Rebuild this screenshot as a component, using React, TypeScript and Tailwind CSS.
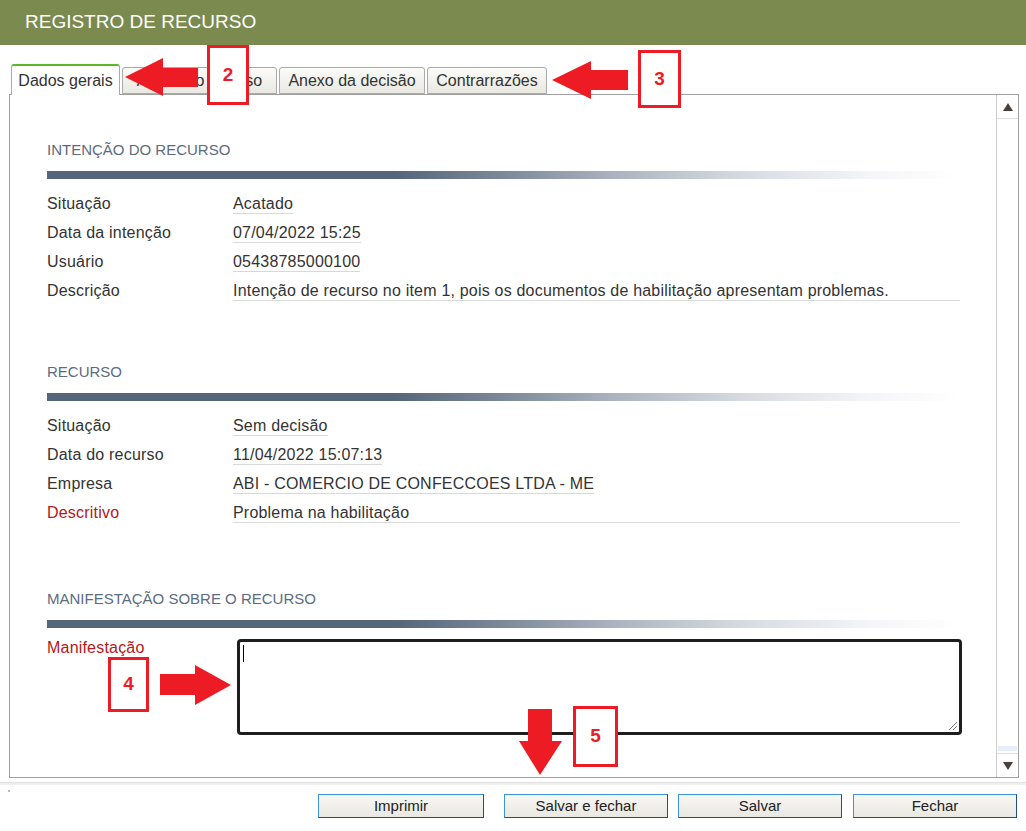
import React from "react";

const font = { fontFamily: '"Liberation Sans", Arial, sans-serif' };

function Row({ label, value, wide, red }: { label: string; value: string; wide?: boolean; red?: boolean }) {
  return (
    <div className="flex h-[29px] items-start pt-[5px] text-[16px] tracking-[0.2px]">
      <div className={`w-[186px] shrink-0 leading-[18px] ${red ? "text-[#b5171c]" : "text-[#333]"}`}>{label}</div>
      <div className={`leading-[18px] border-b border-[#d9d9d9] text-[#333] ${wide ? "flex-1" : ""}`}>{value}</div>
    </div>
  );
}

function Section({ title, children, mt }: { title: string; children?: React.ReactNode; mt: string }) {
  return (
    <div className={mt}>
      <div className="text-[15px] leading-[20px] text-[#5b6c80]">{title}</div>
      <div className="mt-[11px] mb-[11px] h-[8px] w-[913px] bg-[linear-gradient(to_right,#55657a_0%,#55657a_38%,#7d8999_50%,#aab3be_62%,#d6dae0_76%,#f4f5f7_90%,#ffffff_100%)]" />
      {children}
    </div>
  );
}

function Tab({ label, active, w }: { label: string; active?: boolean; w: string }) {
  if (active) {
    return (
      <div className={`${w} h-[31px] -mb-px bg-white border-x border-[#aaa] border-t-2 border-t-[#5cb82a] rounded-t-[3px] flex items-center justify-center text-[16px] text-[#333]`}>
        {label}
      </div>
    );
  }
  return (
    <div className={`${w} h-[27px] mt-[2px] bg-[linear-gradient(#fbfbf8,#e9e8e1)] border border-[#a9a9a9] rounded-t-[3px] flex items-center justify-center text-[16px] text-[#333]`}>
      {label}
    </div>
  );
}

function Btn({ label, w, className }: { label: string; w: string; className?: string }) {
  return (
    <div
      className={`${w} h-[24px] border border-[#3d93dc] border-b-[#1f4f85] border-r-[#1f4f85] bg-[linear-gradient(#f7f7f4,#e9e8e2)] flex items-center justify-center text-[15px] text-[#222] ${className ?? ""}`}
    >
      {label}
    </div>
  );
}

function Box({ n, className }: { n: string; className: string }) {
  return (
    <div className={`absolute bg-white border-[3px] border-[#ed1c24] flex items-center justify-center text-[19px] font-bold text-[#ed1c24] ${className}`}>
      {n}
    </div>
  );
}

export default function App() {
  return (
    <div className="relative w-[1026px] h-[831px] overflow-hidden bg-white flex flex-col" style={font}>
      <div className="h-[45px] shrink-0 bg-[#7b8a4e] flex items-center pl-[25px] text-[19px] text-white">REGISTRO DE RECURSO</div>

      <div className="mt-[20px] ml-[9px] mr-[7px] h-[30px] border-b border-[#a0a0a0] flex items-end gap-[2px] pl-[2px]">
        <Tab label="Dados gerais" active w="w-[109px]" />
        <Tab label="Anexo do recurso" w="w-[155px]" />
        <Tab label="Anexo da decisão" w="w-[146px]" />
        <Tab label="Contrarrazões" w="w-[120px]" />
      </div>

      <div className="ml-[9px] mr-[7px] h-[683px] border-x border-b border-[#a0a0a0] flex">
        <div className="flex-1 pl-[37px] pt-[45px]">
          <Section title="INTENÇÃO DO RECURSO" mt="">
            <div className="w-[913px]">
              <Row label="Situação" value="Acatado" />
              <Row label="Data da intenção" value="07/04/2022 15:25" />
              <Row label="Usuário" value="05438785000100" />
              <Row label="Descrição" value="Intenção de recurso no item 1, pois os documentos de habilitação apresentam problemas." wide />
            </div>
          </Section>
          <Section title="RECURSO" mt="mt-[56px]">
            <div className="w-[913px]">
              <Row label="Situação" value="Sem decisão" />
              <Row label="Data do recurso" value="11/04/2022 15:07:13" />
              <Row label="Empresa" value="ABI - COMERCIO DE CONFECCOES LTDA - ME" />
              <Row label="Descritivo" value="Problema na habilitação" wide red />
            </div>
          </Section>
          <Section title="MANIFESTAÇÃO SOBRE O RECURSO" mt="mt-[61px]">
            <div className="flex items-start">
              <div className="w-[190px] shrink-0 leading-[18px] text-[16px] tracking-[0.2px] text-[#b5171c]">Manifestação</div>
              <div className="relative w-[725px] h-[96px] border-[3px] border-[#1e1e1e] rounded-[4px] bg-white">
                <div className="absolute left-[3px] top-[3px] w-px h-[17px] bg-black" />
                <svg className="absolute right-[1px] bottom-[1px]" width="12" height="12" viewBox="0 0 12 12">
                  <path d="M11 3 L3 11 M11 7 L7 11" stroke="#777" strokeWidth="1" />
                </svg>
              </div>
            </div>
          </Section>
        </div>
        <div className="w-[22px] border-l border-[#cfcfcf] flex flex-col">
          <div className="h-[24px] border-b border-[#dedede] flex items-center justify-center">
            <svg width="12" height="10" viewBox="0 0 12 10"><path d="M6 1 L11 9 L1 9 Z" fill="#4a403b" /></svg>
          </div>
          <div className="flex-1 mx-[1px] mb-[2px] border-b-[5px] border-[#e6eef7]" />
          <div className="h-[24px] border-t border-[#dedede] flex items-center justify-center">
            <svg width="12" height="10" viewBox="0 0 12 10"><path d="M1 1 L11 1 L6 9 Z" fill="#4a403b" /></svg>
          </div>
        </div>
      </div>

      <div className="mt-[4px] h-[3px] border-t border-[#e0e0e0] bg-[#f0f0f0]" />
      <div className="relative flex justify-end pr-[9px] pt-[9px]">
        <div className="absolute left-[8px] top-[5px] w-[2px] h-[2px] bg-[#bbb]" />
        <Btn label="Imprimir" w="w-[166px]" className="mr-[20px]" />
        <Btn label="Salvar e fechar" w="w-[164px]" className="mr-[10px]" />
        <Btn label="Salvar" w="w-[164px]" className="mr-[11px]" />
        <Btn label="Fechar" w="w-[164px]" />
      </div>

      {/* annotations */}
      <svg className="absolute left-0 top-0 pointer-events-none" width="1026" height="831">
        <polygon points="125,77 163,58 163,68 198,68 198,87 163,87 163,96" fill="#ed1c24" />
        <polygon points="552,80 591,61 591,70 628,70 628,90 591,90 591,99" fill="#ed1c24" />
        <polygon points="231,685 195,665 195,674 160,674 160,695 195,695 195,705" fill="#ed1c24" />
        <polygon points="540,775 519,741 528,741 528,709 552,709 552,741 562,741" fill="#ed1c24" />
      </svg>
      <Box n="2" className="left-[207px] top-[45px] w-[42px] h-[60px]" />
      <Box n="3" className="left-[638px] top-[50px] w-[43px] h-[58px]" />
      <Box n="4" className="left-[108px] top-[657px] w-[41px] h-[55px]" />
      <Box n="5" className="left-[573px] top-[706px] w-[45px] h-[61px]" />
    </div>
  );
}
